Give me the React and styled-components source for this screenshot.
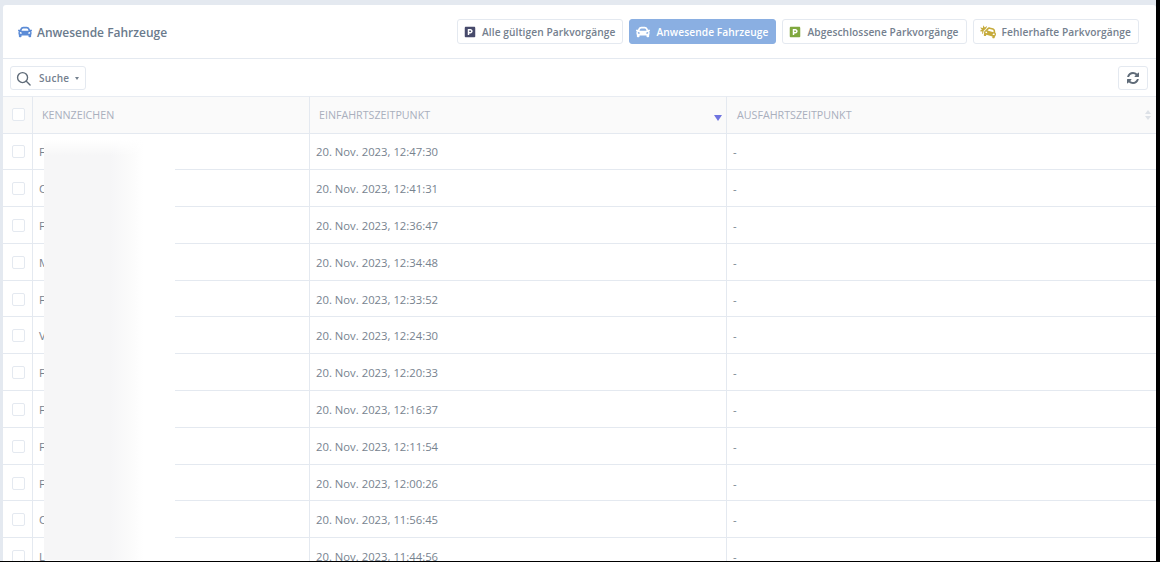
import React from 'react';
import styled, { createGlobalStyle } from 'styled-components';
import { FaCar, FaCarCrash, FaParking } from 'react-icons/fa';

const Global = createGlobalStyle`
  html, body { margin: 0; padding: 0; height: 100%; background: #000; overflow: hidden; }
  #root { height: 562px; width: 1160px; overflow: hidden; }
  * { box-sizing: border-box; }
`;
const Frame = styled.div`
  width: 1156px; height: 561px; background: #e4e9f0; padding: 5px 0 0 3px; overflow: hidden; position: relative;
  font-family: "Open Sans", "Liberation Sans", sans-serif;
`;
const Card = styled.div`
  background: #fff; border-radius: 3px 3px 0 0; height: 700px; width: 1153px;
`;
const Header = styled.div`
  height: 54px; display: flex; align-items: center; justify-content: space-between;
  padding: 0 17px 0 15px; border-bottom: 1px solid #e4e9f0;
`;
const Title = styled.div`
  display: flex; align-items: center; gap: 5px; font-size: 12px; font-weight: 600; color: #6a7a8c; padding-top: 1px;
  svg { margin-top: -1px; }
`;
const Buttons = styled.div` display: flex; gap: 6px; `;
const Btn = styled.div`
  height: 25px; display: flex; align-items: center; gap: 6px; padding: 0 7px 0 6px;
  border: 1px solid ${p => (p.$active ? '#8aafe2' : '#e4e9f0')}; border-radius: 3px;
  background: ${p => (p.$active ? '#8aafe2' : '#fff')};
  color: ${p => (p.$active ? '#fff' : '#74808e')};
  font-size: 10.2px; font-weight: 600; letter-spacing: .08px; white-space: nowrap;
`;
const Toolbar = styled.div`
  height: 37px; display: flex; align-items: center; justify-content: space-between; padding: 1px 8px 0 7px;
`;
const Search = styled.div`
  width: 76px; height: 24px; display: flex; align-items: center; border: 1px solid #e4e9f0; border-radius: 3px;
  padding-left: 5px; gap: 8px; color: #74808e; font-size: 10px; font-weight: 600; letter-spacing: .3px;
`;
const Caret = styled.span`
  width: 0; height: 0; border: 2.5px solid transparent; border-top: 3px solid #74808e; margin: 3px 0 0 -2px;
`;
const Refresh = styled.div`
  width: 30px; height: 24px; display: flex; align-items: center; justify-content: center;
  border: 1px solid #e4e9f0; border-radius: 3px; color: #5f6b78;
`;
const Table = styled.div` display: grid; grid-template-columns: 30px 277px 417px 1fr; `;
const Cell = styled.div`
  height: ${p => (p.$head ? '37.5px' : '36.8px')}; display: flex; align-items: center; position: relative;
  border-bottom: 1px solid #e4e9f0; border-right: ${p => (p.$last ? '0' : '1px solid #e4e9f0')};
  border-top: ${p => (p.$head ? '1px solid #e8ecf2' : '0')};
  background: ${p => (p.$head ? '#fafafa' : '#fff')};
  padding-left: ${p => p.$pl ?? 6}px; padding-top: ${p => (p.$head ? 0 : 1)}px; white-space: nowrap; overflow: hidden;
  font-size: ${p => (p.$head ? '10.7px' : '11.3px')};
  color: ${p => (p.$head ? '#a9afbd' : '#77838f')};
`;
const Check = styled.span`
  width: 13px; height: 13px; border: 1px solid #e4e9f0; border-radius: 2px; background: #fff;
`;
const SortDown = styled.span`
  position: absolute; right: 4px; bottom: 12px; width: 0; height: 0;
  border: 4px solid transparent; border-top: 6px solid #6f74e0; border-bottom: 0;
`;
const SortBoth = styled.span`
  position: absolute; right: 5px; top: 13px; display: flex; flex-direction: column; gap: 2px;
  i { display: block; width: 0; height: 0; border-left: 3.5px solid transparent; border-right: 3.5px solid transparent; }
  i:first-child { border-bottom: 4px solid #dde1e7; }
  i:last-child { border-top: 4px solid #dde1e7; }
`;
const Blur = styled.div`
  position: absolute; left: 44px; top: 140px; width: 131px; height: 420px; pointer-events: none;
  background:
    linear-gradient(180deg, #fff 0, rgba(255,255,255,0) 16px),
    linear-gradient(90deg, #f6f6f7 0, #f6f6f7 50%, #fbfbfb 66%, #fff 76%);
`;

const SearchIcon = () => (
  <svg width="15" height="15" viewBox="0 0 24 24" fill="none" stroke="#5f6b78" strokeWidth="2.2" strokeLinecap="round">
    <circle cx="10.5" cy="10.5" r="8"/><path d="M16.5 16.5L22.5 22.5"/>
  </svg>
);
const RefreshIcon = () => (
  <svg width="12" height="12" viewBox="0 0 1536 1536" fill="#5f6b78">
    <path d="M1511 928q0 5-1 7-64 268-268 434.500T764 1536q-146 0-282.500-55T238 1324l-129 129q-19 19-45 19t-45-19-19-45V960q0-26 19-45t45-19h448q26 0 45 19t19 45-19 45l-137 137q71 66 161 102t187 36q134 0 250-65t186-179q11-17 53-117 8-23 30-23h192q13 0 22.500 9.500t9.500 22.500zm25-800v448q0 26-19 45t-45 19h-448q-26 0-45-19t-19-45 19-45l138-138Q969 256 768 256q-134 0-250 65T332 500q-11 17-53 117-8 23-30 23H50q-13 0-22.500-9.500T18 608v-7q65-268 270-434.500T768 0q146 0 284 55.500T1297 212l130-129q19-19 45-19t45 19 19 45z"/>
  </svg>
);

const rows = [
  ['F','12:47:30'],['C','12:41:31'],['F','12:36:47'],['M','12:34:48'],['F','12:33:52'],['V','12:24:30'],
  ['F','12:20:33'],['F','12:16:37'],['F','12:11:54'],['F','12:00:26'],['C','11:56:45'],['L','11:44:56'],
];

export default function App() {
  return (
    <>
      <Global />
      <Frame>
        <Card>
          <Header>
            <Title><FaCar size={14} color="#5b8bd6" />Anwesende Fahrzeuge</Title>
            <Buttons>
              <Btn><FaParking size={12} color="#474a6b" />Alle gültigen Parkvorgänge</Btn>
              <Btn $active><FaCar size={14} color="#fff" />Anwesende Fahrzeuge</Btn>
              <Btn><FaParking size={12} color="#7fa83e" />Abgeschlossene Parkvorgänge</Btn>
              <Btn><FaCarCrash size={16} color="#c6ab3c" />Fehlerhafte Parkvorgänge</Btn>
            </Buttons>
          </Header>
          <Toolbar>
            <Search><SearchIcon />Suche<Caret /></Search>
            <Refresh><RefreshIcon /></Refresh>
          </Toolbar>
          <Table>
            <Cell $head $pl={9}><Check /></Cell>
            <Cell $head $pl={9}>KENNZEICHEN</Cell>
            <Cell $head $pl={9}>EINFAHRTSZEITPUNKT<SortDown /></Cell>
            <Cell $head $last $pl={10}>AUSFAHRTSZEITPUNKT<SortBoth><i /><i /></SortBoth></Cell>
            {rows.map(([k, t]) => (
              <React.Fragment key={t}>
                <Cell $pl={9}><Check /></Cell>
                <Cell>{k}</Cell>
                <Cell>20. Nov. 2023, {t}</Cell>
                <Cell $last>-</Cell>
              </React.Fragment>
            ))}
          </Table>
        </Card>
        <Blur />
      </Frame>
    </>
  );
}
